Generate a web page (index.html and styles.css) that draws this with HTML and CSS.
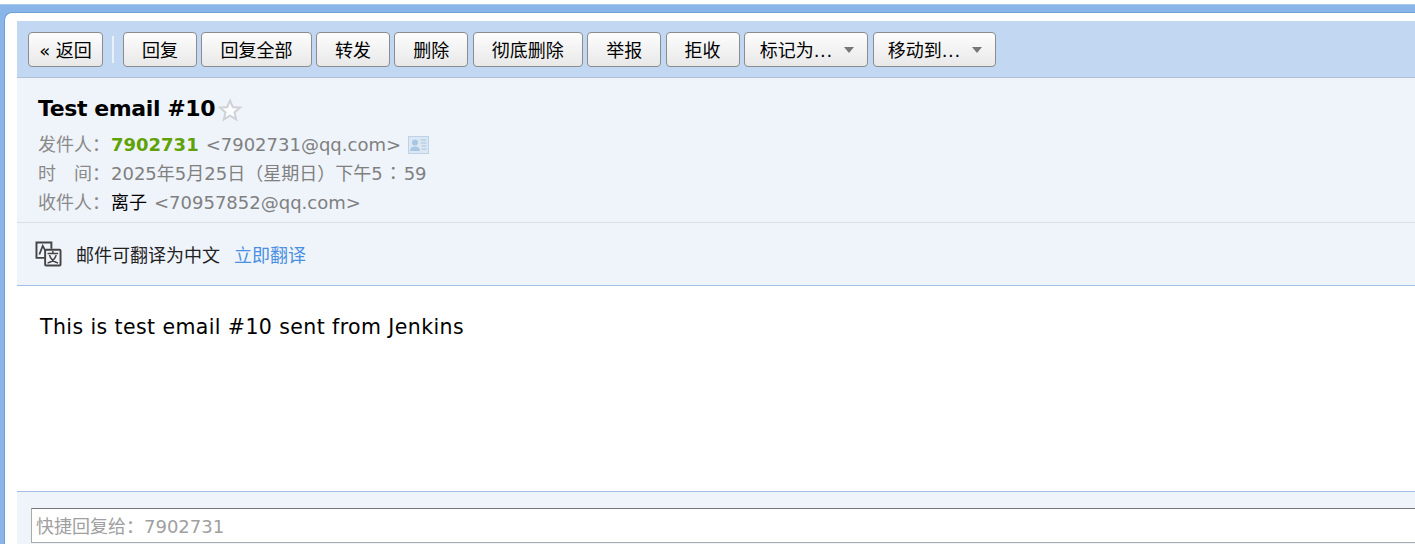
FILE: index.html
```html
<!DOCTYPE html>
<html lang="zh">
<head>
<meta charset="utf-8">
<title>Test email #10</title>
<link rel="stylesheet" href="styles.css">
</head>
<body>
<div class="frame">
  <div class="panel">
    <div class="content">
      <div class="toolbar">
        <button class="btn btn-back">« 返回</button>
        <span class="sep"></span>
        <button class="btn">回复</button>
        <button class="btn btn-wide">回复全部</button>
        <button class="btn">转发</button>
        <button class="btn">删除</button>
        <button class="btn btn-wide">彻底删除</button>
        <button class="btn">举报</button>
        <button class="btn">拒收</button>
        <button class="btn btn-menu">标记为<span class="dots">...</span><span class="caret"></span></button>
        <button class="btn btn-menu">移动到<span class="dots">...</span><span class="caret"></span></button>
      </div>
      <div class="head">
        <div class="subject">
          <span class="subject-text">Test email #10</span>
          <svg class="star" width="24" height="24" viewBox="0 0 24 24"><path d="M12 2.500l2.800 6.600 7.100.6-5.400 4.700 1.700 7-6.200-3.700-6.200 3.700 1.700-7L2.100 9.700l7.100-.6z" fill="#fbfcfe" stroke="#cfd2d6" stroke-width="2"/></svg>
        </div>
        <div class="meta">
          <span class="label">发件人：</span><b class="sender">7902731</b><span class="addr">&lt;7902731@qq.com&gt;</span>
          <svg class="card" width="21" height="18" viewBox="0 0 21 18"><rect x=".5" y=".5" width="20" height="17" fill="#dbe7f3" stroke="#bcd2e8"/><circle cx="7" cy="6.500" r="3" fill="#a9c6e2"/><path d="M2 15c0-3 2-4.500 5-4.500s5 1.500 5 4.500z" fill="#a9c6e2"/><path d="M12.500 4h6M12.500 7h6M13.500 10h5M13.500 13h5" stroke="#a9c6e2" stroke-width="1.200"/></svg>
        </div>
        <div class="meta">
          <span class="label"><span class="label-time">时</span>间：</span><span class="date">2025年5月25日（星期日）下午5<span class="colon" lang="zh-Hant">：</span>59</span>
        </div>
        <div class="meta">
          <span class="label">收件人：</span><span class="rcpt">离子</span><span class="addr">&lt;70957852@qq.com&gt;</span>
        </div>
      </div>
      <div class="translate">
        <svg class="tr-icon" width="27" height="26" viewBox="0 0 28 27" fill="none" stroke="#444"><path d="M10 17.500H1.500V1.500h15.500V8" stroke-width="2"/><rect x="10.500" y="9" width="16" height="16.500" rx="1" stroke-width="2"/><path d="M4.500 14l3.500-9 3 5.500" stroke-width="1.800"/><path d="M13 13h11M18.500 10.500V13M15 14.500c1 4 4.500 7 9 8.500M22 14.500c-1 4-4.500 7-9 8.500" stroke-width="1.500"/></svg>
        <span class="tr-text">邮件可翻译为中文</span>
        <a class="tr-link" href="#">立即翻译</a>
      </div>
      <div class="body-text">This is test email #10 sent from Jenkins</div>
      <div class="quick">
        <div class="quick-input">快捷回复给：7902731</div>
      </div>
    </div>
  </div>
</div>
</body>
</html>
```
FILE: styles.css
```css
* { box-sizing: border-box; }
html, body { margin: 0; height: 100%; overflow: hidden; background: #fff; }
body {
  padding-top: 4px;
  font-family: "DejaVu Sans", "Noto Sans CJK SC", sans-serif;
  font-size: 18px;
  color: #000;
}
.frame {
  height: 540px;
  background: #8ab5e9;
  border-top: 1px solid #a9c8ee;
  padding: 7px 0 0 4px;
}
.panel {
  height: 100%;
  background: #fff;
  border-radius: 8px 0 0 0;
  border-top: 1px solid #6f9fd8;
  border-left: 1px solid #6f9fd8;
  padding: 8px 0 0 12px;
}
.content { width: 1398px; display: flex; flex-direction: column; height: 100%; }
.toolbar {
  height: 57px;
  flex: none;
  display: flex;
  align-items: flex-start;
  gap: 4.250px;
  padding: 11px 0 0 11px;
  background: #c2d8f2;
  border-bottom: 1px solid #b0c0d4;
}
.btn {
  width: 74px;
  height: 35px;
  padding: 3px 0 0;
  border: 1px solid #8c8c8c;
  border-radius: 4px;
  background: linear-gradient(#fdfdfd, #e8e8e8);
  font: 18px/30px "DejaVu Sans", "Noto Sans CJK SC", sans-serif;
  color: #000;
  white-space: nowrap;
  display: flex;
  align-items: center;
  justify-content: center;
}
.btn-back { width: 75px; }
.sep { width: 2px; height: 27px; margin: 4px 4.750px 0 4.750px; background: #e8f0f9; }
.btn-wide { width: 110.500px; }
.btn-menu { width: 124px; padding-left: 15px; justify-content: flex-start; }
.btn-menu + .btn-menu { width: 123px; margin-left: .750px; padding-left: 14px; }
.dots { letter-spacing: .6px; }
.caret {
  width: 0;
  height: 0;
  margin-left: 11px;
  margin-top: -3px;
  border: 5.500px solid transparent;
  border-top: 6px solid #777;
  border-bottom: 0;
}
.head {
  height: 145px;
  flex: none;
  padding: 17px 0 0 21px;
  background: #eff4fb;
  border-bottom: 1px solid #d9dfe6;
}
.subject {
  display: flex;
  align-items: center;
  height: 27px;
  font-weight: 700;
  font-size: 22px;
  margin-bottom: 8px;
}
.subject-text { letter-spacing: -.4px; }
.star { margin-left: 3px; margin-top: 3px; }
.meta {
  height: 29px;
  line-height: 29px;
  color: #808080;
  display: flex;
  align-items: center;
  white-space: nowrap;
}
.label { color: #8a8a8a; width: 73px; flex: none; }
.label-time { display: inline-block; width: 36px; }
.colon {
  display: inline-block;
  width: 21px;
  text-align: center;
  line-height: 1;
  font-family: "Noto Sans CJK TC", sans-serif;
}
.sender { color: #5fa207; font-weight: 700; }
.addr { margin-left: 7px; }
.card { margin-left: 7px; }
.rcpt { color: #000; }
.translate {
  height: 63px;
  flex: none;
  display: flex;
  align-items: center;
  padding-left: 18px;
  background: #eff4fb;
  border-bottom: 1px solid #a3c0e4;
  color: #222;
}
.tr-icon { margin-right: 14px; }
.tr-link { margin-left: 14px; color: #4a90e2; text-decoration: none; }
.body-text {
  flex: 1;
  padding: 27px 0 0 23px;
  font-size: 20.500px;
  letter-spacing: .4px;
  line-height: 28px;
  border-bottom: 1px solid #a3c0e4;
}
.quick {
  height: 52px;
  flex: none;
  padding: 16px 0 0 14px;
  background: #eff4fb;
}
.quick-input {
  height: 35px;
  margin-right: -20px;
  padding-left: 4px;
  line-height: 35px;
  background: #fff;
  border: 1px solid #aaa;
  border-top-color: #777;
  color: #a0a0a0;
}
```
